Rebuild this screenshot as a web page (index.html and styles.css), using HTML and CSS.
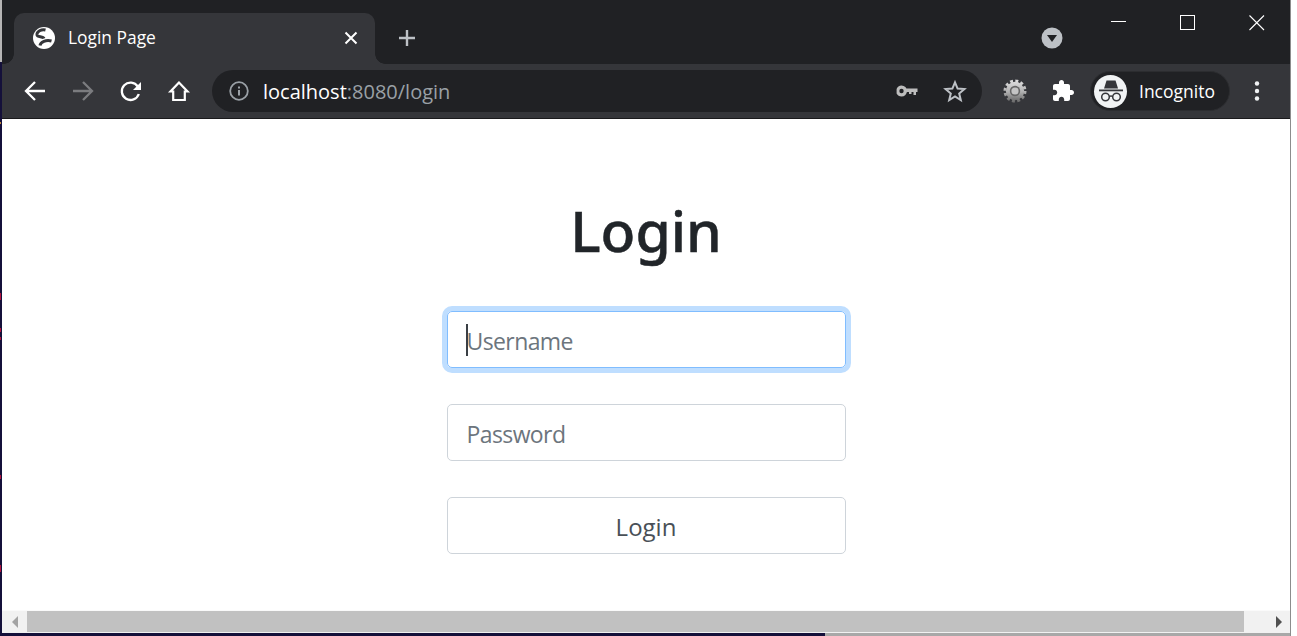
FILE: index.html
```html
<!DOCTYPE html>
<html lang="en">
<head>
<meta charset="utf-8">
<title>Login Page</title>
<link rel="stylesheet" href="styles.css">
</head>
<body>
<div class="screen">
  <div class="edge">
    <i class="tick t1"></i><i class="tick t2"></i><i class="tick t3"></i><i class="tick t4"></i><i class="tick t5"></i><i class="tick t6"></i>
  </div>
  <div class="window">
    <header class="tabstrip">
      <div class="tab">
        <svg class="globe" width="22" height="22" viewBox="0 0 22 22"><circle cx="11" cy="11" r="11" fill="#fff"/><path d="M12.500 3C8.500 2 3.500 4.500 4 8 4.500 10.500 10 9 11 11.500" fill="none" stroke="#35363a" stroke-width="3"/><path d="M7 18.500C7.500 15 13 12.500 18.500 14" fill="none" stroke="#35363a" stroke-width="3"/></svg>
        <span class="tab-title">Login Page</span>
        <svg class="tab-close" width="14" height="14" viewBox="0 0 14 14"><path d="M1.500 1.500l11 11M12.500 1.500l-11 11" stroke="#fff" stroke-width="2"/></svg>
      </div>
      <svg class="newtab" width="18" height="18" viewBox="0 0 18 18"><path d="M9 1v16M1 9h16" stroke="#bdc1c6" stroke-width="2.400"/></svg>
      <svg class="tabsearch" width="22" height="22" viewBox="0 0 22 22"><circle cx="11" cy="11" r="10.500" fill="#bdc1c6"/><path d="M6 8h10l-5 7z" fill="#202124"/></svg>
      <div class="caption">
        <svg width="16" height="16" viewBox="0 0 16 16"><path d="M0 6.500h15" stroke="#fff" stroke-width="1"/></svg>
        <svg width="16" height="16" viewBox="0 0 16 16"><rect x=".5" y=".5" width="14" height="14" fill="none" stroke="#fff"/></svg>
        <svg width="16" height="16" viewBox="0 0 16 16"><path d="M.5.500l14.500 14.500M15 .500.5 15" stroke="#fff" stroke-width="1.100"/></svg>
      </div>
    </header>
    <nav class="toolbar">
      <svg class="nav first" width="24" height="24" viewBox="0 0 24 24"><path d="M22 12H3.500M12 3 3 12l9 9" fill="none" stroke="#fff" stroke-width="2.300"/></svg>
      <svg class="nav" width="24" height="24" viewBox="0 0 24 24"><path d="M2 12h18.500M12 3l9 9-9 9" fill="none" stroke="#7b7c7f" stroke-width="2.300"/></svg>
      <svg class="nav" width="24" height="24" viewBox="0 0 24 24"><path d="M19.800 15a8.700 8.700 0 1 1-1-7.500" fill="none" stroke="#fff" stroke-width="2.300"/><path d="M22 3v8h-8z" fill="#fff"/></svg>
      <svg class="nav" width="24" height="24" viewBox="0 0 24 24"><path d="M12 3.500 3.500 12.500h2.700v8.500h11.600v-8.500h2.700z" fill="none" stroke="#fff" stroke-width="2.200"/></svg>
      <div class="omnibox">
        <svg class="info" width="20" height="20" viewBox="0 0 20 20"><circle cx="10" cy="10" r="8.800" fill="none" stroke="#9aa0a6" stroke-width="1.800"/><path d="M9 9h2v5.500H9zM9 5.500h2v2H9z" fill="#9aa0a6"/></svg>
        <span class="url"><span class="host">localhost</span>:8080/login</span>
        <svg class="key" width="22" height="12" viewBox="0 0 22 12"><path d="M5.500.500a5.500 5.500 0 1 1 0 11 5.500 5.500 0 0 1-4.900-3V4A5.500 5.500 0 0 1 5.500.500ZM10 3.500h11.500V7H20v3h-2.500V7H15.500v2H13V7h-3z" fill="#bdbdbd"/><circle cx="5.500" cy="6" r="2.200" fill="#202124"/></svg>
        <svg class="star" width="24" height="24" viewBox="0 0 24 24"><path d="M12 3.300l2.600 6.300 6.800.5-5.200 4.400 1.600 6.600L12 17.500l-5.800 3.600 1.600-6.600-5.200-4.400 6.800-.5z" fill="none" stroke="#bdc1c6" stroke-width="2"/></svg>
      </div>
      <svg class="gear" width="24" height="24" viewBox="0 0 24 24"><defs><linearGradient id="g" x1="0" y1="0" x2="0" y2="1"><stop offset="0" stop-color="#dcdcdc"/><stop offset=".55" stop-color="#b0b0b0"/><stop offset="1" stop-color="#707070"/></linearGradient></defs><circle cx="12" cy="12" r="9.200" fill="url(#g)"/><circle cx="12" cy="12" r="10" fill="none" stroke="url(#g)" stroke-width="3" stroke-dasharray="2.900 2.340"/><circle cx="12" cy="12" r="5.200" fill="#666"/><circle cx="12" cy="12" r="3.600" fill="#c4c4c4"/></svg>
      <svg class="puzzle" width="24" height="24" viewBox="0 0 24 24"><path d="M20.500 11H19V7c0-1.100-.9-2-2-2h-4V3.500C13 2.120 11.880 1 10.500 1S8 2.120 8 3.500V5H4c-1.100 0-1.990.9-1.990 2v3.800H3.500c1.490 0 2.700 1.210 2.700 2.700s-1.210 2.700-2.700 2.700H2V20c0 1.100.9 2 2 2h3.800v-1.500c0-1.490 1.210-2.700 2.700-2.700 1.490 0 2.700 1.210 2.700 2.700V22H17c1.100 0 2-.9 2-2v-4h1.500c1.380 0 2.500-1.120 2.500-2.500S21.880 11 20.500 11z" fill="#fff"/></svg>
      <div class="profile">
        <span class="avatar"><svg width="26" height="24" viewBox="0 0 26 24"><path d="M8.500 1.500h9L20 9.500H6z" fill="#35363a"/><path d="M1 10.500h24v1.800H1z" fill="#35363a"/><circle cx="7.500" cy="18" r="3.800" fill="none" stroke="#35363a" stroke-width="1.500"/><circle cx="18.500" cy="18" r="3.800" fill="none" stroke="#35363a" stroke-width="1.500"/><path d="M11.200 17.500q1.800-1 3.600 0" fill="none" stroke="#35363a" stroke-width="1.300"/></svg></span>
        <span class="profile-name">Incognito</span>
      </div>
      <svg class="kebab" width="6" height="20" viewBox="0 0 6 20"><circle cx="3" cy="2.500" r="2.200" fill="#f1f3f4"/><circle cx="3" cy="10" r="2.200" fill="#f1f3f4"/><circle cx="3" cy="17.500" r="2.200" fill="#f1f3f4"/></svg>
    </nav>
    <main class="page">
      <h1 class="title">Login</h1>
      <form class="form">
        <div class="field focused"><span class="caret"></span><span class="placeholder">Username</span></div>
        <div class="field"><span class="placeholder">Password</span></div>
        <div class="field submit">Login</div>
      </form>
    </main>
    <div class="scrollbar">
      <span class="arrow left"></span>
      <span class="thumb"></span>
      <span class="arrow right"></span>
    </div>
    <div class="frame-bottom"></div>
  </div>
  <div class="gutter"></div>
</div>
</body>
</html>
```
FILE: styles.css
```css
* { box-sizing: border-box; }
html, body { margin: 0; height: 100%; overflow: hidden; background: #fff; }
body { font-family: "Open Sans", "Noto Sans", sans-serif; }
svg { display: block; flex: none; }

.screen { display: flex; width: 1297px; height: 636px; }
.edge {
  width: 2px;
  flex: none;
  background: linear-gradient(#b5b5b5 0 62px, #14103a 62px);
  display: flex;
  flex-direction: column;
}
.tick { display: block; width: 1px; background: #b3123f; }
.t1 { margin-top: 122px; height: 2px; background: #c08a3a; }
.t2 { margin-top: 169px; height: 7px; }
.t3 { margin-top: 28px; height: 4px; }
.t4 { margin-top: 5px; height: 3px; }
.t5 { margin-top: 135px; height: 4px; }
.t6 { margin-top: 86px; height: 7px; }

.window { width: 1288px; flex: none; display: flex; flex-direction: column; position: relative; }
.gutter { width: 7px; flex: none; background: linear-gradient(90deg, #8c8c8c 0 1px, #fff 1px); }

.tabstrip { height: 64px; background: #202124; display: flex; align-items: flex-start; padding-top: 13px; padding-left: 12px; flex: none; }
.tab { width: 361px; height: 51px; background: #35363a; border-radius: 10px 10px 0 0; display: flex; align-items: center; padding: 0 17px 1px 19px; position: relative; }
.tab::before, .tab::after { content: ""; position: absolute; bottom: 0; width: 10px; height: 10px; }
.tab::before { left: -10px; background: radial-gradient(circle at 0 0, transparent 9.500px, #35363a 10px); }
.tab::after { right: -10px; background: radial-gradient(circle at 100% 0, transparent 9.500px, #35363a 10px); }
.globe { margin-right: 13px; }
.tab-title { font-size: 17.400px; color: #fff; flex: 1; white-space: nowrap; margin-top: -2px; }
.newtab { margin: 16px 0 0 23px; }
.tabsearch { margin: 14px 0 0 625px; }
.caption { display: flex; margin: 2px 0 0 auto; padding-right: 25px; gap: 53px; }

.toolbar { height: 55px; background: #35363a; border-bottom: 1px solid #1a1a1c; display: flex; align-items: center; flex: none; }
.nav { margin-right: 24px; }
.nav.first { margin-left: 21px; }
.omnibox { width: 770px; height: 42px; margin-left: -3px; border-radius: 21px; background: #202124; display: flex; align-items: center; padding: 0 15px 0 17px; }
.url { font-size: 20px; color: #9aa0a6; margin-left: 14px; flex: 1; white-space: nowrap; }
.host { color: #fff; }
.key { margin-right: 25px; }
.gear { margin-left: 21px; }
.puzzle { margin-left: 24px; }
.profile { margin-left: 15px; width: 140px; height: 40px; border-radius: 20px; background: #202124; border: 1px solid #2c2d30; display: flex; align-items: center; padding-left: 3px; }
.avatar { width: 33px; height: 33px; border-radius: 50%; background: #f1f3f4; display: flex; align-items: center; justify-content: center; }
.profile-name { font-size: 17.500px; color: #fff; margin-left: 12px; }
.kebab { margin-left: 24px; }

.page { flex: 1; background: #fff; display: flex; flex-direction: column; align-items: center; min-height: 0; }
.title { margin: 75px 0 0; font-family: "Noto Sans", "Open Sans", sans-serif; font-size: 57px; line-height: 72px; font-weight: 500; -webkit-text-stroke: .5px #212529; color: #212529; }
.form { width: 399px; margin-top: 45px; display: flex; flex-direction: column; gap: 36px; }
.field { height: 57px; border: 1px solid #ced4da; border-radius: 5px; padding: 2px 19px 0; display: flex; align-items: center; font-size: 24px; position: relative; }
.placeholder { color: #6c757d; font-size: 23px; letter-spacing: -.6px; }
.focused { border-color: #80bdff; box-shadow: 0 0 0 5px #bfdeff; }
.caret { position: absolute; left: 18px; top: 12px; width: 2px; height: 32px; background: #3a3f45; }
.submit { justify-content: center; color: #495057; }

.scrollbar { height: 23px; flex: none; background: #f1f1f1; display: flex; align-items: flex-start; border-top: 1px solid #fafafa; }
.thumb { flex: none; width: 1217px; height: 21px; background: #c1c1c1; }
.arrow { flex: none; display: flex; height: 21px; align-items: center; }
.arrow.left { width: 25px; justify-content: center; }
.arrow.left::before { content: ""; border: 6px solid transparent; border-left: 0; border-right: 6px solid #a3a3a3; }
.arrow.right { width: 46px; padding-left: 32px; }
.arrow.right::before { content: ""; border: 6px solid transparent; border-right: 0; border-left: 6px solid #505050; }
.frame-bottom { height: 3px; flex: none; background: linear-gradient(90deg, #14103a 0 823px, #a8a8a8 823px); }
```
